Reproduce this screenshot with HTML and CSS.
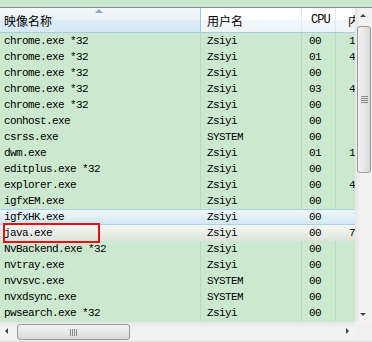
FILE: index.html
```html
<!DOCTYPE html>
<html lang="zh-CN">

<head>
    <meta charset="UTF-8" />
    <title>任务管理器 - 进程</title>
    <link rel="stylesheet" href="styles.css">
</head>

<body>
    <div class="top"></div>
    <div class="frame">
        <div class="view">
            <div class="head">
                <div class="hc c1 sorted">映像名称<span class="sort"></span></div>
                <div class="hc c2">用户名</div>
                <div class="hc c3">CPU</div>
                <div class="hc c4">内存</div>
            </div>
            <div class="rows">
                <div class="row"><span class="c1">chrome.exe *32</span><span class="c2">Zsiyi</span><span class="c3">00</span><span class="c4">1</span></div>
                <div class="row"><span class="c1">chrome.exe *32</span><span class="c2">Zsiyi</span><span class="c3">01</span><span class="c4">4</span></div>
                <div class="row"><span class="c1">chrome.exe *32</span><span class="c2">Zsiyi</span><span class="c3">00</span><span class="c4"></span></div>
                <div class="row"><span class="c1">chrome.exe *32</span><span class="c2">Zsiyi</span><span class="c3">03</span><span class="c4">4</span></div>
                <div class="row"><span class="c1">chrome.exe *32</span><span class="c2">Zsiyi</span><span class="c3">00</span><span class="c4"></span></div>
                <div class="row"><span class="c1">conhost.exe</span><span class="c2">Zsiyi</span><span class="c3">00</span><span class="c4"></span></div>
                <div class="row"><span class="c1">csrss.exe</span><span class="c2">SYSTEM</span><span class="c3">00</span><span class="c4"></span></div>
                <div class="row"><span class="c1">dwm.exe</span><span class="c2">Zsiyi</span><span class="c3">01</span><span class="c4">1</span></div>
                <div class="row"><span class="c1">editplus.exe *32</span><span class="c2">Zsiyi</span><span class="c3">00</span><span class="c4"></span></div>
                <div class="row"><span class="c1">explorer.exe</span><span class="c2">Zsiyi</span><span class="c3">00</span><span class="c4">4</span></div>
                <div class="row"><span class="c1">igfxEM.exe</span><span class="c2">Zsiyi</span><span class="c3">00</span><span class="c4"></span></div>
                <div class="row hover"><span class="c1">igfxHK.exe</span><span class="c2">Zsiyi</span><span class="c3">00</span><span class="c4"></span></div>
                <div class="row selected"><span class="c1">java.exe</span><span class="c2">Zsiyi</span><span class="c3">00</span><span class="c4">7</span><div class="mark"></div></div>
                <div class="row"><span class="c1">NvBackend.exe *32</span><span class="c2">Zsiyi</span><span class="c3">00</span><span class="c4"></span></div>
                <div class="row"><span class="c1">nvtray.exe</span><span class="c2">Zsiyi</span><span class="c3">00</span><span class="c4"></span></div>
                <div class="row"><span class="c1">nvvsvc.exe</span><span class="c2">SYSTEM</span><span class="c3">00</span><span class="c4"></span></div>
                <div class="row"><span class="c1">nvxdsync.exe</span><span class="c2">SYSTEM</span><span class="c3">00</span><span class="c4"></span></div>
                <div class="row"><span class="c1">pwsearch.exe *32</span><span class="c2">Zsiyi</span><span class="c3">00</span><span class="c4"></span></div>
            </div>
        </div>

        <div class="vbar">
            <div class="arrow up"></div>
            <div class="vtrack">
                <div class="vthumb"><span class="grip"></span></div>
            </div>
            <div class="arrow down"></div>
        </div>

        <div class="hbar">
            <div class="arrow left"></div>
            <div class="htrack">
                <div class="hthumb"><span class="grip"></span></div>
            </div>
            <div class="arrow right"></div>
        </div>

        <div class="corner"></div>
    </div>
</body>

</html>
```

FILE: styles.css
```css
body {
    margin: 0;
    background-color: #cce8cf;
    font-family: "Liberation Mono", "Noto Sans CJK SC", monospace;
    color: #000;
    width: 372px;
    height: 342px;
    overflow: hidden;
}

.top {
    height: 7px;
    border-bottom: 1px solid #8a8f8a;
}

.frame {
    display: grid;
    grid-template-columns: 355px 17px;
    grid-template-rows: 314px 19px;
}

.view {
    overflow: hidden;
}

/* header */

.head {
    display: flex;
    height: 24px;
    border-bottom: 1px solid #a9cbe3;
    background: linear-gradient(#ffffff, #ffffff 45%, #f3f7fb 55%, #eef3f8);
}

.hc {
    position: relative;
    display: flex;
    align-items: center;
    font-family: "Noto Sans CJK SC", "Liberation Sans", sans-serif;
    font-size: 12px;
    border-right: 1px solid #e1e8ee;
    white-space: nowrap;
    overflow: hidden;
}

.hc.c3 {
    font-family: "Liberation Mono", monospace;
    font-size: 12px;
    letter-spacing: -1px;
}

.sorted {
    background: linear-gradient(#f3f9fd, #eaf4fb 45%, #dbecf8 55%, #d6e8f5);
    border-right-color: #9ec6e4;
}

.sort {
    position: absolute;
    left: 95px;
    top: 1px;
    width: 0;
    height: 0;
    border-left: 4px solid transparent;
    border-right: 4px solid transparent;
    border-bottom: 4px solid #8aa8c4;
}

/* columns */

.c1 {
    width: 196px;
    padding-left: 4px;
}

.c2 {
    width: 94px;
    padding-left: 6px;
}

.c3 {
    width: 26px;
    padding-left: 7px;
}

.c4 {
    width: 6px;
    padding-left: 13px;
}

.hc.c1 { padding-left: 4px; }
.hc.c3 { padding-left: 9px; width: 24px; }
.hc.c4 { padding-left: 12px; width: 7px; border-right: none; }

/* rows */

.row {
    position: relative;
    display: flex;
    height: 16px;
    line-height: 16px;
    font-size: 11px;
    letter-spacing: -0.6px;
    white-space: nowrap;
}

.row span {
    overflow: hidden;
    border-right: 1px solid #b9d9c7;
}

.row .c4 {
    border-right: none;
}

.row.hover {
    height: 14px;
    line-height: 14px;
    border-top: 1px solid #a7d1ef;
    border-bottom: 1px solid #a7d1ef;
    background: linear-gradient(#eef7fc, #e2f0f8 50%, #d3e8f3);
}

.row.selected {
    height: 16px;
    background: linear-gradient(#f6f7f2, #eceee8 50%, #dfe2dc);
}

.row.hover span,
.row.selected span {
    border-right-color: transparent;
}

.row .mark {
    position: absolute;
    left: 3px;
    top: -2px;
    width: 93px;
    height: 16px;
    border: 2px solid #e81010;
}

/* scrollbars */

.vbar {
    display: flex;
    flex-direction: column;
    background: linear-gradient(90deg, #e6e6e6, #f2f2f2 30%, #f2f2f2);
}

.hbar {
    display: flex;
    background: linear-gradient(#e6e6e6, #f2f2f2 30%, #f2f2f2);
}

.arrow {
    flex: none;
    width: 17px;
    height: 17px;
    position: relative;
}

.arrow::after {
    content: "";
    position: absolute;
    width: 0;
    height: 0;
}

.up::after {
    left: 5px;
    top: 6px;
    border-left: 3px solid transparent;
    border-right: 3px solid transparent;
    border-bottom: 3px solid #444;
}

.down::after {
    left: 5px;
    top: 8px;
    border-left: 3px solid transparent;
    border-right: 3px solid transparent;
    border-top: 3px solid #444;
}

.left::after {
    left: 5px;
    top: 6px;
    border-top: 3px solid transparent;
    border-bottom: 3px solid transparent;
    border-right: 3px solid #444;
}

.right::after {
    left: 8px;
    top: 6px;
    border-top: 3px solid transparent;
    border-bottom: 3px solid transparent;
    border-left: 3px solid #444;
}

.vtrack {
    flex: 1;
    padding: 1px 1px 0 2px;
}

.vthumb {
    height: 145px;
    border: 1px solid #9a9a9a;
    border-radius: 3px;
    background: linear-gradient(90deg, #f2f2f2, #e8e8e8 50%, #d8d8d8);
    display: flex;
    align-items: center;
    justify-content: center;
}

.vthumb .grip {
    width: 7px;
    height: 7px;
    background: repeating-linear-gradient(#8a8a8a 0, #8a8a8a 1px, transparent 1px, transparent 2px);
}

.htrack {
    flex: 1;
    padding: 2px 0 1px 0;
}

.hthumb {
    width: 111px;
    height: 14px;
    border: 1px solid #9a9a9a;
    border-radius: 3px;
    background: linear-gradient(#f2f2f2, #e8e8e8 50%, #d8d8d8);
    display: flex;
    align-items: center;
    justify-content: center;
}

.hthumb .grip {
    width: 7px;
    height: 7px;
    background: repeating-linear-gradient(90deg, #8a8a8a 0, #8a8a8a 1px, transparent 1px, transparent 2px);
}

.corner {
    background: #f0f0f0;
}
```
